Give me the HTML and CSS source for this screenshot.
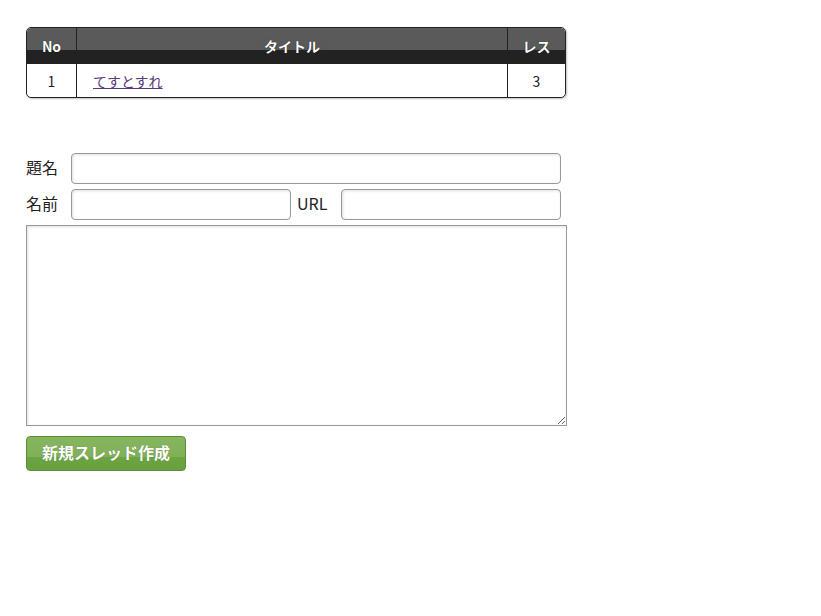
FILE: index.html
```html
<!DOCTYPE html>
<html lang="ja">
<head>
<meta charset="utf-8">
<title>掲示板</title>
<link rel="stylesheet" href="styles.css">
</head>
<body>
<div class="page">
  <table class="threads">
    <thead>
      <tr><th class="c-no">No</th><th class="c-title">タイトル</th><th class="c-res">レス</th></tr>
    </thead>
    <tbody>
      <tr><td class="c-no">1</td><td class="c-title"><a href="#">てすとすれ</a></td><td class="c-res">3</td></tr>
    </tbody>
  </table>

  <form class="post">
    <div class="row">
      <label class="lbl">題名</label>
      <input class="inp inp-title" type="text">
    </div>
    <div class="row">
      <label class="lbl">名前</label>
      <input class="inp inp-name" type="text">
      <label class="lbl lbl-url">URL</label>
      <input class="inp inp-url" type="text">
    </div>
    <textarea class="body"></textarea>
    <button class="btn" type="button">新規スレッド作成</button>
  </form>
</div>
</body>
</html>
```

FILE: styles.css
```css
html, body { margin: 0; padding: 0; background: #fff; }
body {
  font-family: "Noto Sans CJK JP", "Noto Sans", sans-serif;
  color: #222;
}
.page { padding: 27px 26px; }

.threads {
  width: 540px;
  border-collapse: separate;
  border-spacing: 0;
  border: 1px solid #222;
  border-radius: 5px;
  box-shadow: 1px 1px 2px rgba(0,0,0,0.25);
  font-size: 13px;
  overflow: hidden;
}
.threads th {
  height: 36px;
  padding: 0;
  color: #fff;
  font-weight: bold;
  font-size: 14px;
  background: linear-gradient(to bottom, #5b5b5b 0, #595959 62%, #222 62%, #222 100%);
  text-shadow: 0 0 1px #000;
}
.threads th:first-child { border-top-left-radius: 4px; }
.threads th:last-child { border-top-right-radius: 4px; }
.threads td {
  height: 33px;
  padding: 0;
  text-align: center;
  font-size: 14px;
}
.threads .c-no { width: 49px; border-right: 1px solid #222; }
.threads .c-res { width: 57px; border-left: 1px solid #222; }
.threads td.c-title { text-align: left; padding-left: 16px; }
.threads a { color: #5a3a7a; }

.post { margin-top: 55px; width: 541px; }
.row {
  display: flex;
  align-items: center;
  height: 31px;
  margin-bottom: 5px;
}
.lbl {
  font-size: 16px;
  width: 45px;
  color: #222;
  margin-bottom: 4px;
}
.lbl-url { width: 44px; padding-left: 6px; }
.inp {
  box-sizing: border-box;
  height: 31px;
  border: 1px solid #999;
  border-radius: 4px;
  box-shadow: inset 1px 1px 3px rgba(0,0,0,0.12);
  padding: 0 6px;
  font-size: 14px;
  font-family: inherit;
}
.inp-title { width: 490px; }
.inp-name { width: 220px; }
.inp-url { width: 220px; }
.body {
  display: block;
  box-sizing: border-box;
  width: 541px;
  height: 201px;
  border: 1px solid #999;
  margin: 0;
  box-shadow: inset 1px 1px 3px rgba(0,0,0,0.12);
  font-family: inherit;
}
.btn {
  margin-top: 10px;
  width: 160px;
  height: 35px;
  border: 1px solid #5b8e35;
  border-radius: 4px;
  background: linear-gradient(to bottom, #86b55f 0, #80b058 62%, #6ba440 62%, #6aa03f 100%);
  color: #fff;
  font-family: inherit;
  font-size: 16px;
  font-weight: bold;
  text-shadow: 0 0 1px rgba(0,0,0,0.3);
  padding: 0 0 3px 0;
}
```
